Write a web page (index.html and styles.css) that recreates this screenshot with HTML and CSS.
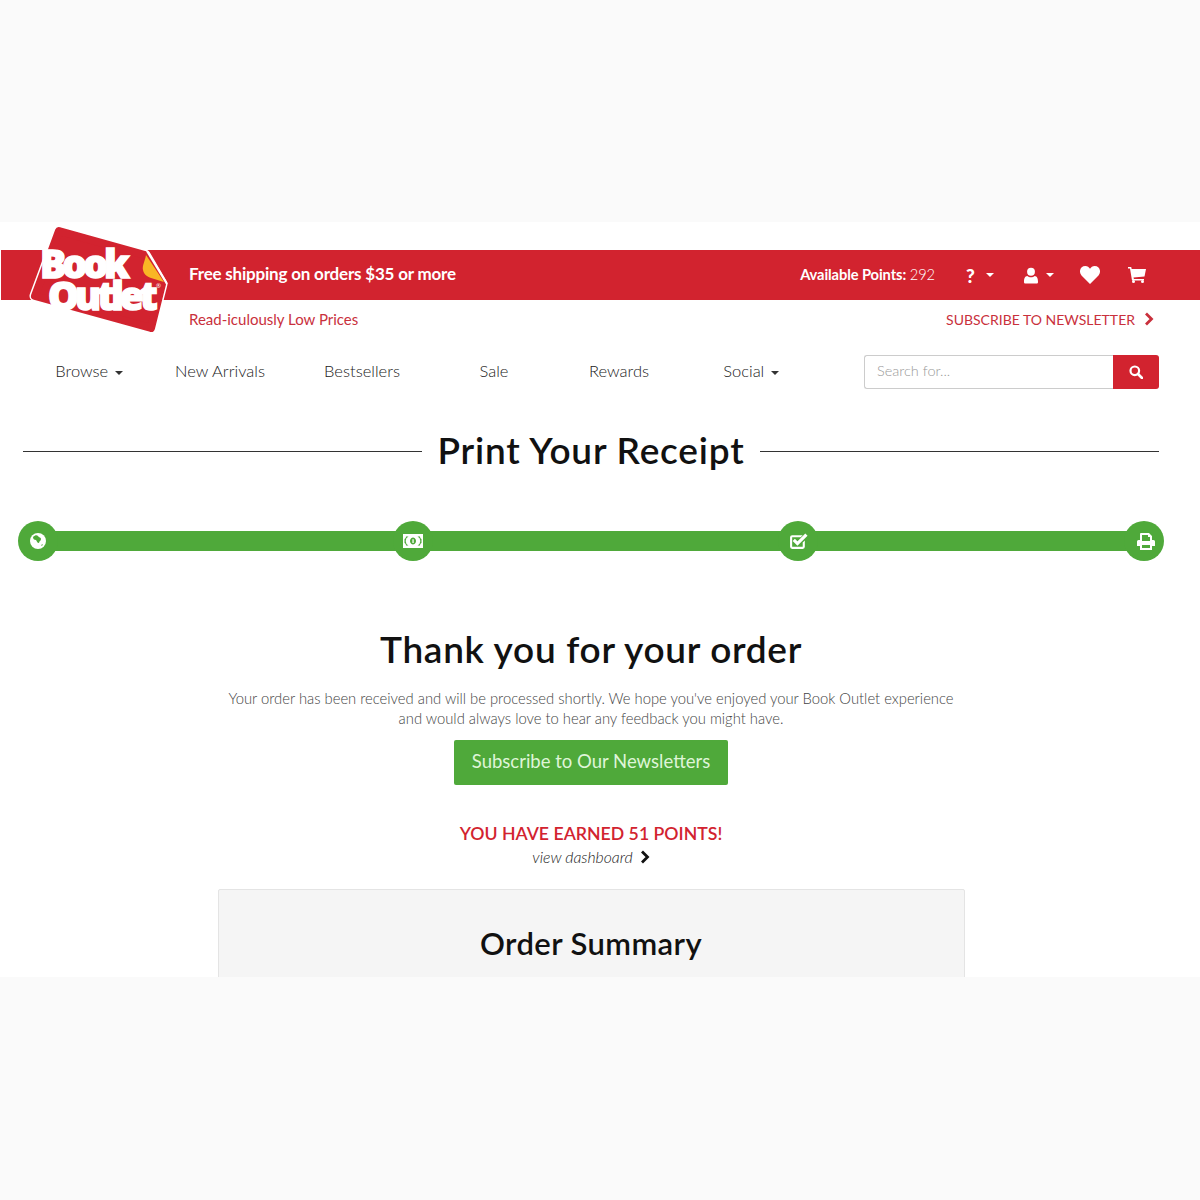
FILE: index.html
```html
<!DOCTYPE html>
<html lang="en">
<head>
    <meta charset="UTF-8">
    <title>Print Your Receipt</title>
    <link rel="stylesheet" href="styles.css">
</head>
<body>
    <div class="band-top"></div>
    <div class="page">
        <a class="logo" href="#">
            <svg width="146" height="116" viewBox="0 0 146 116">
                <path d="M33 7 119 31 136 60 125 104 9 72z" fill="#fff" stroke="#fff" stroke-width="11" stroke-linejoin="round"/>
                <path d="M33 7 119 31 136 60 125 104 9 72z" fill="#d2232f" stroke="#d2232f" stroke-width="8" stroke-linejoin="round"/>
                <path d="M121 27 141 60" fill="none" stroke="#fff" stroke-width="2"/>
                <path d="M120 31c-1 6-4 11-3 15 1 5 5 7 8 8l13 4z" fill="#f9b625"/>
                <text class="logo-text"><tspan class="logo-book" x="14" y="54">Book</tspan><tspan class="logo-outlet" x="22" y="86">Outlet</tspan><tspan class="logo-reg" x="130" y="64">®</tspan></text>
            </svg>
        </a>
        <header class="top-bar">
            <div class="free-ship">Free shipping on orders $35 or more</div>
            <div class="account">
                <div class="points"><b>Available Points:</b> <span class="points-num">292</span></div>
                <div class="acc-icon acc-help"><b>?</b><span class="caret"></span></div>
                <div class="acc-icon acc-user">
                    <svg width="14" height="17" viewBox="0 0 15 17"><circle cx="7.500" cy="4.500" r="4.200" fill="#fff"/><path d="M1 17c-1 0-1-1-1-2 0-3 1-6 3.500-6 1 1 2.500 1.500 4 1.500s3-.5 4-1.500c2.500 0 3.500 3 3.500 6 0 1 0 2-1 2z" fill="#fff"/></svg>
                    <span class="caret"></span>
                </div>
                <div class="acc-icon acc-heart">
                    <svg width="20" height="18" viewBox="0 0 20 18"><path d="M10 18 1.500 9.500C-2 5 1 0 5.300 0 7.500 0 9 1.200 10 2.700 11 1.200 12.500 0 14.700 0 19 0 22 5 18.500 9.500z" fill="#fff"/></svg>
                </div>
                <div class="acc-icon acc-cart">
                    <svg width="18" height="16" viewBox="0 0 18 16"><path d="M0 0h3.200l.5 2H18l-1.500 7.500-11 1 .4 1.500H16v1.500H4L2 1.500H0z" fill="#fff"/><circle cx="5.500" cy="14.500" r="1.500" fill="#fff"/><circle cx="14.500" cy="14.500" r="1.500" fill="#fff"/></svg>
                </div>
            </div>
        </header>
        <div class="sub-bar">
            <div class="sub-tag">Read-iculously Low Prices</div>
            <div class="sub-news">SUBSCRIBE TO NEWSLETTER
                <svg class="chev" width="10" height="14" viewBox="0 0 10 14"><path d="M2 1.500 7.500 7 2 12.500" fill="none" stroke="currentColor" stroke-width="2.800"/></svg>
            </div>
        </div>
        <nav class="nav-row">
            <ul class="nav-list">
                <li>Browse <span class="caret dark"></span></li>
                <li>New Arrivals</li>
                <li>Bestsellers</li>
                <li>Sale</li>
                <li>Rewards</li>
                <li>Social <span class="caret dark"></span></li>
            </ul>
            <form class="search">
                <input class="search-input" type="text" placeholder="Search for...">
                <button class="search-btn" type="button">
                    <svg width="14" height="14" viewBox="0 0 14 14"><circle cx="5.800" cy="5.800" r="4.300" fill="none" stroke="#fff" stroke-width="2.200"/><path d="m9 9 4 4" stroke="#fff" stroke-width="2.600" stroke-linecap="round"/></svg>
                </button>
            </form>
        </nav>
        <h1 class="page-title"><span>Print Your Receipt</span></h1>
        <div class="steps">
            <div class="step">
                <svg width="16" height="16" viewBox="0 0 16 16"><circle cx="8" cy="8" r="8" fill="#fff"/><path d="M3 4c2-2 4-2 5-1 1 2 3 1 3 3s-2 2-2 4c-2 0-2-2-3-3-2 0-3-1-3-3zM11 12l2-1-1 2z" fill="#4fa93a"/></svg>
            </div>
            <div class="seg seg-1"></div>
            <div class="step">
                <svg width="20" height="14" viewBox="0 0 20 14"><path fill-rule="evenodd" d="M0 0h20v14H0zM3 2.500C3 4 2 5 1.500 5v4C2 9 3 10 3 11.500h2.500a5 5 0 0 1 0-9zM14.500 2.500a5 5 0 0 1 0 9H17c0-1.500 1-2.500 1.500-2.500V5C18 5 17 4 17 2.500zM10 3.500a3 3.500 0 1 0 .01 0z" fill="#fff"/><path d="M9.400 5.200h1.300v3.800h-1.300z" fill="#fff"/></svg>
            </div>
            <div class="seg seg-2"></div>
            <div class="step">
                <svg width="19" height="17" viewBox="0 0 18 16"><path d="M13 9v4H3V4h8l2-2H3a2 2 0 0 0-2 2v9a2 2 0 0 0 2 2h10a2 2 0 0 0 2-2V7z" fill="#fff"/><path d="m4.500 6.500 3.500 3.500 8.500-8.500" fill="none" stroke="#fff" stroke-width="3"/></svg>
            </div>
            <div class="seg seg-3"></div>
            <div class="step step-print">
                <svg width="18" height="17" viewBox="0 0 18 17"><path fill-rule="evenodd" d="M4 0h8l3 3v4h1.500A1.500 1.500 0 0 1 18 8.500V13h-3v4H3v-4H0V8.500A1.500 1.500 0 0 1 1.500 7H3V1a1 1 0 0 1 1-1zM5 2v6h8V4h-2V2zM5 12v3h8v-3z" fill="#fff"/></svg>
            </div>
        </div>
        <main class="thanks">
            <h2 class="thanks-title">Thank you for your order</h2>
            <p class="thanks-text">Your order has been received and will be processed shortly. We hope you've enjoyed your Book Outlet experience<br>and would always love to hear any feedback you might have.</p>
            <a class="btn-green" href="#">Subscribe to Our Newsletters</a>
            <div class="earned">YOU HAVE EARNED 51 POINTS!</div>
            <div class="dash"><i>view dashboard</i>
                <svg class="chev" width="10" height="14" viewBox="0 0 10 14"><path d="M2 1.500 7.500 7 2 12.500" fill="none" stroke="#111" stroke-width="2.800"/></svg>
            </div>
            <section class="summary">
                <h3 class="summary-title">Order Summary</h3>
            </section>
        </main>
    </div>
    <div class="band-bottom"></div>
</body>
</html>
```

FILE: styles.css
```css
*{
    margin: 0;
    padding: 0;
    box-sizing: border-box;
}
ul{
    list-style: none;
}
a{
    text-decoration: none;
}
body{
    background-color: #fafafa;
    font-family: "Lato", "Open Sans", sans-serif;
    color: #444;
}
.band-top{
    height: 222px;
}
.band-bottom{
    height: 223px;
}
.page{
    height: 755px;
    background-color: #fff;
    padding-top: 28px;
    position: relative;
    overflow: hidden;
}
.logo{
    position: absolute;
    left: 26px;
    top: 2px;
}
.logo-text{
    font-family: "Open Sans", sans-serif;
    font-weight: 800;
    font-size: 39px;
    fill: #fff;
    stroke: #fff;
    stroke-width: 1.500px;
}
.logo-book{
    letter-spacing: -4px;
}
.logo-outlet{
    letter-spacing: -4px;
}
.logo-reg{
    font-size: 6px;
    font-weight: 400;
    stroke-width: 0;
}
.top-bar{
    height: 50px;
    margin-left: 1px;
    background-color: #d2232f;
    color: #fff;
    display: flex;
    align-items: center;
    justify-content: space-between;
    padding: 0 54px 0 188px;
}
.free-ship{
    font-size: 17px;
    font-weight: 700;
    letter-spacing: -0.200px;
    padding-bottom: 3px;
}
.account{
    display: flex;
    align-items: center;
    font-size: 14.700px;
}
.points{
    letter-spacing: -0.100px;
    margin-right: 31px;
    padding-bottom: 3px;
}
.points-num{
    font-weight: 300;
}
.acc-icon{
    display: flex;
    align-items: center;
}
.acc-help{
    font-size: 19px;
    font-weight: 900;
    width: 58px;
    gap: 11px;
}
.acc-user{
    width: 56px;
    gap: 8px;
}
.acc-heart{
    width: 48px;
}
.caret{
    display: inline-block;
    width: 0;
    height: 0;
    border-top: 4px solid #fff;
    border-left: 4px solid transparent;
    border-right: 4px solid transparent;
}
.caret.dark{
    border-top-color: #333;
    vertical-align: middle;
    margin-left: 2px;
}
.sub-bar{
    height: 38px;
    display: flex;
    align-items: center;
    justify-content: space-between;
    padding: 0 46px 0 189px;
    color: #c9303c;
    font-size: 14px;
}
.sub-tag{
    font-size: 15px;
}
.sub-news{
    display: flex;
    align-items: center;
    gap: 9px;
}
.nav-row{
    height: 52px;
    margin-top: 8px;
    display: flex;
    align-items: center;
    padding: 0 41px 0 24px;
    justify-content: space-between;
}
.nav-list{
    display: grid;
    grid-template-columns: 130px 132px 152px 112px 138px 126px;
    text-align: center;
    font-size: 16.500px;
    font-weight: 300;
    color: #222;
    padding-bottom: 2px;
}
.search{
    display: flex;
    width: 295px;
    height: 34px;
}
.search-input{
    flex: 1;
    min-width: 0;
    border: 1px solid #ccc;
    border-right: 0;
    border-radius: 3px 0 0 3px;
    padding: 0 12px 3px;
    font-family: inherit;
    font-size: 14.500px;
    font-weight: 300;
}
.search-input::placeholder{
    color: #999;
}
.search-btn{
    width: 46px;
    border: 0;
    border-radius: 0 3px 3px 0;
    background-color: #d2232f;
    display: flex;
    align-items: center;
    justify-content: center;
}
.page-title{
    margin: 22px 41px 0 23px;
    height: 62px;
    display: flex;
    align-items: center;
    font-size: 37px;
    font-weight: 600;
    letter-spacing: 0.800px;
    color: #111;
}
.page-title::before,
.page-title::after{
    content: "";
    flex: 1;
    height: 1px;
    background-color: #333;
}
.page-title span{
    padding: 0 16px;
    margin-bottom: 4px;
}
.steps{
    margin: 39px 0 0 18px;
    display: flex;
    align-items: center;
}
.step{
    width: 40px;
    height: 40px;
    border-radius: 50%;
    background-color: #4fa93a;
    display: flex;
    align-items: center;
    justify-content: center;
    flex: none;
    position: relative;
}
.step-print svg{
    margin-left: 4px;
}
.seg{
    height: 20px;
    margin: 0 -4px;
    background-color: #4fa93a;
    flex: none;
}
.seg-1{
    width: 343px;
}
.seg-2{
    width: 353px;
}
.seg-3{
    width: 314px;
}
.thanks{
    margin-top: 65px;
    padding-right: 18px;
    display: flex;
    flex-direction: column;
    align-items: center;
    text-align: center;
}
.thanks-title{
    font-size: 37px;
    line-height: 46px;
    font-weight: 600;
    letter-spacing: 0.700px;
    color: #111;
}
.thanks-text{
    margin-top: 16px;
    font-size: 14.800px;
    font-weight: 300;
    line-height: 20px;
    color: #444;
}
.btn-green{
    margin-top: 12px;
    width: 274px;
    height: 45px;
    line-height: 43px;
    background-color: #4fa93a;
    color: #dff5d8;
    font-size: 18.500px;
    border-radius: 2px;
}
.earned{
    margin-top: 37px;
    font-size: 17.700px;
    line-height: 24px;
    font-weight: 600;
    color: #d2232f;
}
.dash{
    margin-top: 1px;
    display: flex;
    align-items: center;
    gap: 7px;
    font-size: 15.800px;
    font-weight: 300;
    line-height: 20px;
    color: #222;
}
.summary{
    margin-top: 22px;
    width: 747px;
    height: 200px;
    background-color: #f5f5f5;
    border: 1px solid #e4e4e4;
    border-radius: 2px;
    padding-top: 33px;
}
.summary-title{
    font-size: 31px;
    line-height: 40px;
    font-weight: 600;
    letter-spacing: 0.400px;
    color: #111;
}
```
